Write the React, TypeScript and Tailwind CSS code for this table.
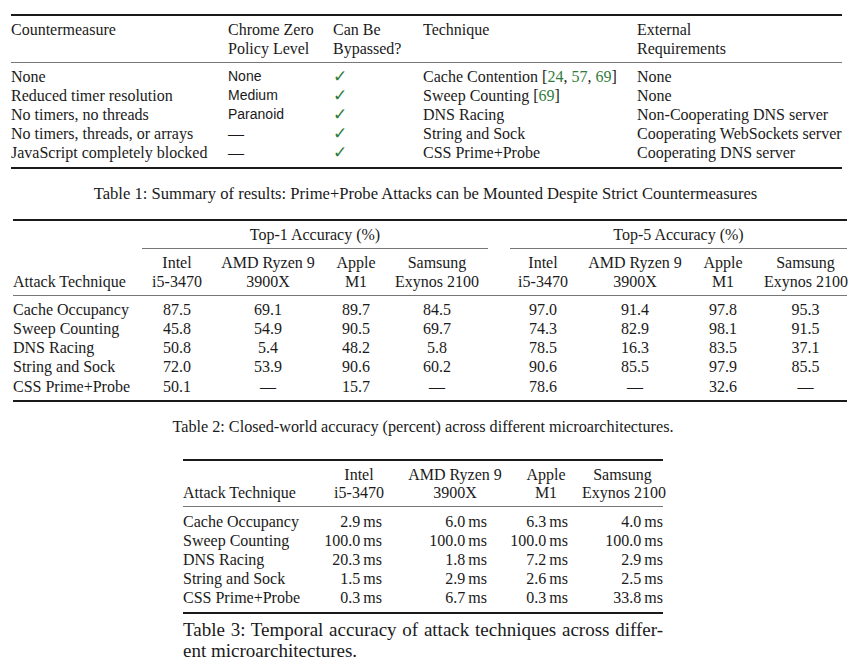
const t1Rows = [
  { cm: 'None', level: 'None', tech: 'Cache Contention', cites: ['24', '57', '69'], ext: 'None' },
  { cm: 'Reduced timer resolution', level: 'Medium', tech: 'Sweep Counting', cites: ['69'], ext: 'None' },
  { cm: 'No timers, no threads', level: 'Paranoid', tech: 'DNS Racing', cites: [], ext: 'Non-Cooperating DNS server' },
  { cm: 'No timers, threads, or arrays', level: '—', tech: 'String and Sock', cites: [], ext: 'Cooperating WebSockets server' },
  { cm: 'JavaScript completely blocked', level: '—', tech: 'CSS Prime+Probe', cites: [], ext: 'Cooperating DNS server' },
];

const t2Rows = [
  ['Cache Occupancy', '87.5', '69.1', '89.7', '84.5', '97.0', '91.4', '97.8', '95.3'],
  ['Sweep Counting', '45.8', '54.9', '90.5', '69.7', '74.3', '82.9', '98.1', '91.5'],
  ['DNS Racing', '50.8', '5.4', '48.2', '5.8', '78.5', '16.3', '83.5', '37.1'],
  ['String and Sock', '72.0', '53.9', '90.6', '60.2', '90.6', '85.5', '97.9', '85.5'],
  ['CSS Prime+Probe', '50.1', '—', '15.7', '—', '78.6', '—', '32.6', '—'],
];

const t3Rows = [
  ['Cache Occupancy', '2.9', '6.0', '6.3', '4.0'],
  ['Sweep Counting', '100.0', '100.0', '100.0', '100.0'],
  ['DNS Racing', '20.3', '1.8', '7.2', '2.9'],
  ['String and Sock', '1.5', '2.9', '2.6', '2.5'],
  ['CSS Prime+Probe', '0.3', '6.7', '0.3', '33.8'],
];

function Cites({ nums }: { nums: string[] }) {
  if (nums.length === 0) return null;
  return (
    <>
      {' ['}
      {nums.map((n, i) => (
        <span key={n}>
          <span className="text-[#2f7d3a]">{n}</span>
          {i < nums.length - 1 ? ', ' : ''}
        </span>
      ))}
      {']'}
    </>
  );
}

function Table1() {
  return (
    <div className="ml-[11px] w-[831px]">
      <div className="h-[2px] bg-[#1a1a1a]" />
      <div className="grid grid-cols-[217px_105px_90px_214px_205px] pt-[3.5px] pb-[4px] leading-[19px]">
        <span>Countermeasure</span>
        <span>Chrome Zero<br />Policy Level</span>
        <span>Can Be<br />Bypassed?</span>
        <span>Technique</span>
        <span>External<br />Requirements</span>
      </div>
      <div className="h-[1px] bg-[#777]" />
      <div className="pt-[4px] pb-[5.5px]">
        {t1Rows.map((r) => (
          <div key={r.cm} className="grid h-[19px] grid-cols-[217px_105px_90px_214px_205px] leading-[19px]">
            <span>{r.cm}</span>
            {r.level === '—' ? (
              <span>—</span>
            ) : (
              <span className="font-['Liberation_Sans',Arial,sans-serif] text-[14px] leading-[19px]">{r.level}</span>
            )}
            <span className="font-['DejaVu_Sans',sans-serif] text-[17px] font-bold leading-[19px] text-[#2f7d3a]">✓</span>
            <span className="whitespace-nowrap">{r.tech}<Cites nums={r.cites} /></span>
            <span className="whitespace-nowrap">{r.ext}</span>
          </div>
        ))}
      </div>
      <div className="h-[2px] bg-[#1a1a1a]" />
      <p className="mt-[14.5px] text-center text-[16.6px] leading-[19px] -ml-[2px] whitespace-nowrap">
        Table 1: Summary of results: Prime+Probe Attacks can be Mounted Despite Strict Countermeasures
      </p>
    </div>
  );
}

function Table2() {
  return (
    <div className="ml-[13px] mt-[16.5px] w-[834px]">
      <div className="h-[2px] bg-[#1a1a1a]" />
      <div className="grid grid-cols-[129px_70px_112px_64px_104px_18px_66px_118px_58px_95px] pt-[3.5px] leading-[19px]">
        <span />
        <div className="col-span-4 mr-[4px]">
          <div className="text-center">Top-1 Accuracy (%)</div>
          <div className="mt-[4px] h-[1px] bg-[#777]" />
        </div>
        <span />
        <div className="col-span-4">
          <div className="text-center">Top-5 Accuracy (%)</div>
          <div className="mt-[4px] h-[1px] bg-[#777]" />
        </div>
      </div>
      <div className="grid grid-cols-[129px_70px_112px_64px_104px_18px_66px_118px_58px_95px] pt-[4px] pb-[4px] leading-[19px] text-center">
        <span className="self-end text-left">Attack Technique</span>
        <span>Intel<br />i5-3470</span>
        <span>AMD Ryzen 9<br />3900X</span>
        <span>Apple<br />M1</span>
        <span className="pr-[6px] whitespace-nowrap">Samsung<br />Exynos 2100</span>
        <span />
        <span>Intel<br />i5-3470</span>
        <span>AMD Ryzen 9<br />3900X</span>
        <span>Apple<br />M1</span>
        <span className="pl-[12px] whitespace-nowrap">Samsung<br />Exynos 2100</span>
      </div>
      <div className="h-[1px] bg-[#777]" />
      <div className="pt-[4px] pb-[4.5px] leading-[19.25px]">
        {t2Rows.map((r) => (
          <div key={r[0]} className="grid grid-cols-[129px_70px_112px_64px_104px_18px_66px_118px_58px_95px] text-center">
            <span className="text-left whitespace-nowrap">{r[0]}</span>
            <span>{r[1]}</span>
            <span>{r[2]}</span>
            <span>{r[3]}</span>
            <span className="pr-[6px]">{r[4]}</span>
            <span />
            <span>{r[5]}</span>
            <span>{r[6]}</span>
            <span>{r[7]}</span>
            <span className="pl-[12px]">{r[8]}</span>
          </div>
        ))}
      </div>
      <div className="h-[2px] bg-[#1a1a1a]" />
      <p className="mt-[15.5px] text-center text-[16.2px] leading-[19px] -ml-[14px] whitespace-nowrap">
        Table 2: Closed-world accuracy (percent) across different microarchitectures.
      </p>
    </div>
  );
}

function Table3() {
  return (
    <div className="ml-[183px] mt-[22px] w-[480px]">
      <div className="h-[2px] bg-[#1a1a1a]" />
      <div className="grid grid-cols-[135px_82px_110px_72px_81px] pt-[5px] pb-[4px] leading-[18px] text-center">
        <span className="self-end text-left">Attack Technique</span>
        <span>Intel<br />i5-3470</span>
        <span className="whitespace-nowrap">AMD Ryzen 9<br />3900X</span>
        <span>Apple<br />M1</span>
        <span className="whitespace-nowrap">Samsung<br />Exynos 2100</span>
      </div>
      <div className="h-[1px] bg-[#777]" />
      <div className="pt-[5.5px] pb-[5px] leading-[19px]">
        {t3Rows.map((r) => (
          <div key={r[0]} className="grid grid-cols-[135px_64px_105px_81px_95px] text-right">
            <span className="text-left whitespace-nowrap">{r[0]}</span>
            {r.slice(1).map((v, i) => (
              <span key={i} className="whitespace-nowrap">{v}{'\u2009'}ms</span>
            ))}
          </div>
        ))}
      </div>
      <div className="h-[2px] bg-[#1a1a1a]" />
      <div className="mt-[4.5px] text-[19px] leading-[21px]">
        <p className="text-justify [text-align-last:justify] whitespace-nowrap">
          Table 3: Temporal accuracy of attack techniques across differ-
        </p>
        <p>ent microarchitectures.</p>
      </div>
    </div>
  );
}

export default function App() {
  return (
    <div className="w-[860px] h-[661px] overflow-hidden bg-white pt-[14px] text-[16px] text-[#1a1a1a] font-['Liberation_Serif','Times_New_Roman',serif]">
      <Table1 />
      <Table2 />
      <Table3 />
    </div>
  );
}
